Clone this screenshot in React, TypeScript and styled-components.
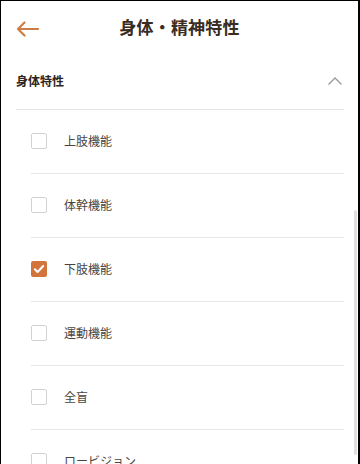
import React, { useState } from "react";
import styled, { createGlobalStyle } from "styled-components";

const Global = createGlobalStyle`
  html, body { margin: 0; padding: 0; background: #fff; }
  body { font-family: "Noto Sans CJK JP", "Noto Sans", sans-serif; }
  * { box-sizing: border-box; }
`;

const Frame = styled.div`
  position: relative;
  width: 360px;
  height: 464px;
  overflow: hidden;
  border-top: 1px solid #000;
  border-left: 1px solid #000;
  border-right: 2px solid #000;
  background: #fff;
`;

const Header = styled.header`
  height: 55px;
  display: grid;
  grid-template-columns: 56px 1fr 56px;
  align-items: center;
`;

const BackButton = styled.button`
  border: none;
  background: none;
  padding: 0 0 0 15px;
  height: 100%;
  display: flex;
  align-items: center;
  cursor: pointer;
`;

const Title = styled.h1`
  margin: 0 0 4px;
  text-align: center;
  font-size: 17px;
  line-height: 24px;
  font-weight: 700;
  color: #3a2c20;
  letter-spacing: 0.2px;
`;

const SectionHeader = styled.div`
  height: 54px;
  margin: 0 14px 0 15px;
  display: flex;
  align-items: center;
  justify-content: space-between;
  border-bottom: 1px solid #e4e4e4;
  padding-bottom: 4px;
`;

const SectionTitle = styled.span`
  font-size: 12px;
  font-weight: 700;
  color: #2e2620;
`;

const List = styled.ul`
  list-style: none;
  margin: 0;
  padding: 0 14px 0 30px;
`;

const Row = styled.li`
  height: 64px;
  display: flex;
  align-items: center;
  gap: 17px;
  border-bottom: 1px solid #e6e6e6;
  padding-bottom: 2px;
  cursor: pointer;
`;

const Box = styled.span<{ $checked: boolean }>`
  width: 16px;
  height: 16px;
  border-radius: 2px;
  display: flex;
  align-items: center;
  justify-content: center;
  border: ${(p) => (p.$checked ? "none" : "1.5px solid #d2d2d2")};
  background: ${(p) => (p.$checked ? "#d4743d" : "#fff")};
`;

const Label = styled.span`
  font-size: 12px;
  color: #4a4440;
`;

const ScrollThumb = styled.div`
  position: absolute;
  right: 1px;
  top: 209px;
  width: 3px;
  height: 245px;
  border-radius: 2px;
  background: #e0e0e0;
`;

const items = ["上肢機能", "体幹機能", "下肢機能", "運動機能", "全盲", "ロービジョン"];

export default function App() {
  const [checked, setChecked] = useState<Record<string, boolean>>({ 下肢機能: true });
  return (
    <>
      <Global />
      <Frame>
        <Header>
          <BackButton aria-label="back">
            <svg width="23" height="16" viewBox="0 0 23 16" fill="none">
              <path d="M22 8H2M8.5 1.5L2 8l6.5 6.5" stroke="#cf7c44" strokeWidth="2.2" strokeLinecap="round" strokeLinejoin="round" />
            </svg>
          </BackButton>
          <Title>身体・精神特性</Title>
          <span />
        </Header>
        <SectionHeader>
          <SectionTitle>身体特性</SectionTitle>
          <svg width="16" height="10" viewBox="0 0 16 10" fill="none" style={{ marginRight: 1 }}>
            <path d="M1.5 8.5L8 2l6.5 6.5" stroke="#9a9a9a" strokeWidth="1.3" />
          </svg>
        </SectionHeader>
        <List>
          {items.map((it) => (
            <Row key={it} onClick={() => setChecked((c) => ({ ...c, [it]: !c[it] }))}>
              <Box $checked={!!checked[it]}>
                {checked[it] && (
                  <svg width="12" height="10" viewBox="0 0 12 10" fill="none">
                    <path d="M1.8 5.2L4.6 8 10.2 2" stroke="#fff" strokeWidth="2" strokeLinecap="round" strokeLinejoin="round" />
                  </svg>
                )}
              </Box>
              <Label>{it}</Label>
            </Row>
          ))}
        </List>
        <ScrollThumb />
      </Frame>
    </>
  );
}
